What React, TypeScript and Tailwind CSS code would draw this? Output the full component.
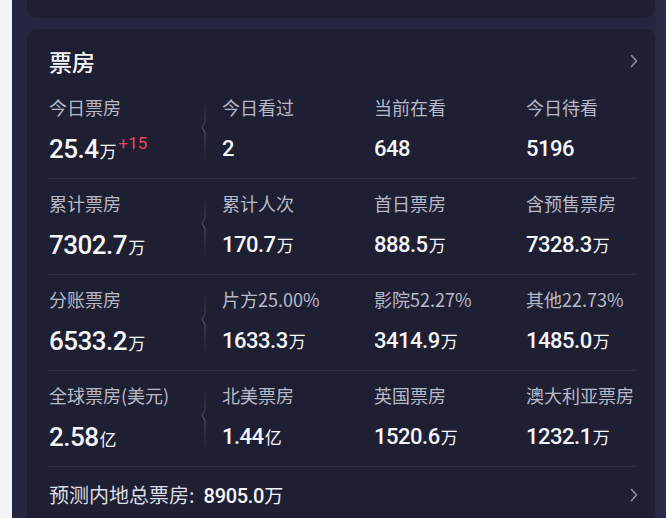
import React from 'react';

type Cell = {
  label: string;
  value: string;
  unit?: string;
  delta?: string;
};

const rows: Cell[][] = [
  [
    { label: '今日票房', value: '25.4', unit: '万', delta: '+15' },
    { label: '今日看过', value: '2' },
    { label: '当前在看', value: '648' },
    { label: '今日待看', value: '5196' },
  ],
  [
    { label: '累计票房', value: '7302.7', unit: '万' },
    { label: '累计人次', value: '170.7', unit: '万' },
    { label: '首日票房', value: '888.5', unit: '万' },
    { label: '含预售票房', value: '7328.3', unit: '万' },
  ],
  [
    { label: '分账票房', value: '6533.2', unit: '万' },
    { label: '片方25.00%', value: '1633.3', unit: '万' },
    { label: '影院52.27%', value: '3414.9', unit: '万' },
    { label: '其他22.73%', value: '1485.0', unit: '万' },
  ],
  [
    { label: '全球票房(美元)', value: '2.58', unit: '亿' },
    { label: '北美票房', value: '1.44', unit: '亿' },
    { label: '英国票房', value: '1520.6', unit: '万' },
    { label: '澳大利亚票房', value: '1232.1', unit: '万' },
  ],
];

const Chevron = () => (
  <svg width="8" height="14" viewBox="0 0 8 14" fill="none" className="-mr-[2px] shrink-0">
    <path d="M1.5 1.5L6.5 7L1.5 12.5" stroke="#8d8ea2" strokeWidth="1.6" strokeLinecap="round" strokeLinejoin="round" />
  </svg>
);

// thin separator with a small notch in the middle
const Divider = ({ id }: { id: string }) => (
  <svg width="8" height="60" viewBox="0 0 8 60" fill="none" className="shrink-0">
    <defs>
      <linearGradient id={id} x1="0" y1="0" x2="0" y2="60" gradientUnits="userSpaceOnUse">
        <stop offset="0" stopColor="#4c4e6a" stopOpacity="0" />
        <stop offset="0.5" stopColor="#5a5c78" stopOpacity="1" />
        <stop offset="1" stopColor="#4c4e6a" stopOpacity="0" />
      </linearGradient>
    </defs>
    <path d="M6 0V22L3.2 27.5L6 33V60" stroke={`url(#${id})`} strokeWidth="1" />
  </svg>
);

const Value = ({ cell, big }: { cell: Cell; big?: boolean }) => (
  <div className="mt-[14px] flex h-8 items-baseline leading-8 text-[#f6f6f9]">
    <span
      className={
        big
          ? "font-['Roboto',sans-serif] text-[26px] font-medium tracking-[-0.5px]"
          : "font-['Roboto',sans-serif] text-[22px] font-medium tracking-[-0.5px]"
      }
    >
      {cell.value}
    </span>
    {cell.unit && (
      <span className="ml-[1px] font-['Noto_Sans_CJK_SC',sans-serif] text-[17px]">{cell.unit}</span>
    )}
    {cell.delta && (
      <span className="ml-[2px] mt-[2px] self-start font-['Roboto',sans-serif] text-[17px] leading-[17px] text-[#ef4453]">
        {cell.delta}
      </span>
    )}
  </div>
);

const Label = ({ text }: { text: string }) => (
  <div className="h-6 whitespace-nowrap font-['Noto_Sans_CJK_SC',sans-serif] text-[18px] leading-6 text-[#b8b9c6]">
    {text}
  </div>
);

export default function App() {
  return (
    <div className="flex h-[518px] w-[666px] overflow-hidden bg-[#252640]">
      <div className="w-[12px] shrink-0 bg-[#f5f5f7]" />
      <div className="flex min-w-0 flex-1 flex-col pl-[15px] pr-[1px]">
        <div className="h-[18px] shrink-0 rounded-b-[10px] bg-[#1e1f33]" />
        <div className="mt-[11px] flex-1 rounded-t-[10px] bg-[#1e1f33] pl-[22px] pr-[19px] pt-[16px]">
          <div className="mb-[6px] flex h-8 items-center justify-between">
            <span className="font-['Noto_Sans_CJK_SC',sans-serif] text-[23px] font-medium leading-8 text-[#f4f4f7]">
              票房
            </span>
            <Chevron />
          </div>

          {rows.map((row, r) => (
            <div
              key={r}
              className="grid grid-cols-[173px_152px_152px_1fr] border-b border-[#2c2e46] pb-[13px] pt-[12px]"
            >
              {row.map((cell, c) =>
                c === 0 ? (
                  <div key={c} className="flex items-center">
                    <div className="w-[150px]">
                      <Label text={cell.label} />
                      <Value cell={cell} big />
                    </div>
                    <Divider id={`div-${r}`} />
                  </div>
                ) : (
                  <div key={c}>
                    <Label text={cell.label} />
                    <Value cell={cell} />
                  </div>
                ),
              )}
            </div>
          ))}

          <div className="flex items-center justify-between pt-[14px]">
            <div className="flex h-7 items-baseline leading-7">
              <span className="font-['Noto_Sans_CJK_SC',sans-serif] text-[20px] text-[#dcdce3]">预测内地总票房</span>
              <span className="mr-[9px] font-['Noto_Sans_CJK_SC',sans-serif] text-[20px] text-[#dcdce3]">:</span>
              <span className="font-['Roboto',sans-serif] text-[20px] font-medium tracking-[-0.3px] text-[#f6f6f9]">
                8905.0
              </span>
              <span className="font-['Noto_Sans_CJK_SC',sans-serif] text-[19px] text-[#f6f6f9]">万</span>
            </div>
            <Chevron />
          </div>
        </div>
      </div>
      <div className="w-[10px] shrink-0 bg-[#2a2b47]" />
    </div>
  );
}
